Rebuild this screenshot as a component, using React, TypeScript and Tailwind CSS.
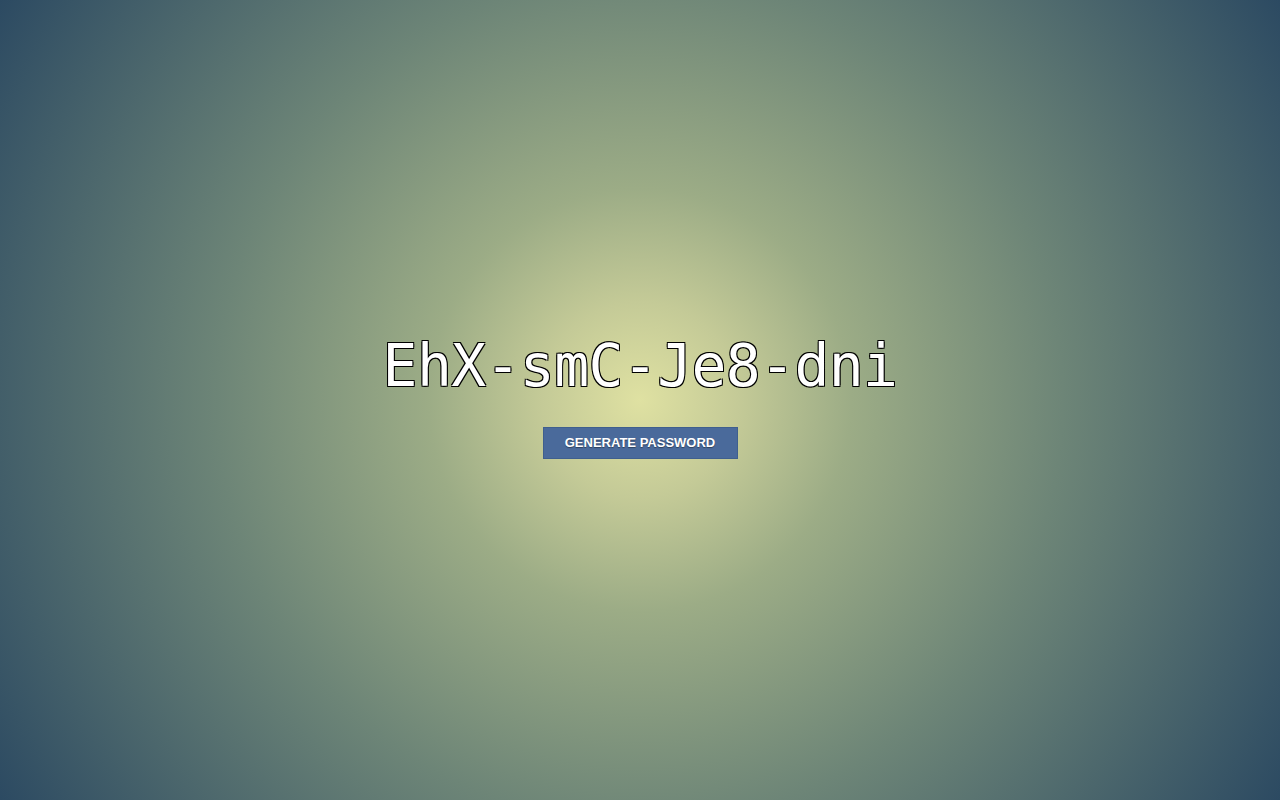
export default function App() {
  return (
    <div className="flex h-screen w-full flex-col items-center justify-center bg-[radial-gradient(circle,#dfe1a2_0%,#c4ca97_13%,#9cac86_28%,#6d8577_56%,#2c4a62_100%)]">
      <h1 className="m-0 font-['DejaVu_Sans_Mono',monospace] text-[58px] leading-none tracking-[-0.6px] text-white [text-shadow:1px_1px_0_#000,-1px_-1px_0_#000,1px_-1px_0_#000,-1px_1px_0_#000]">
        EhX-smC-Je8-dni
      </h1>
      <button
        type="button"
        className="mt-[32px] mb-[5px] h-8 w-[195px] border border-[#3f5f8e] bg-[#4a6a9b] font-['Liberation_Sans',Arial,sans-serif] text-[13px] font-bold text-white [text-shadow:0_1px_1px_rgba(0,0,0,0.4)]"
      >
        GENERATE PASSWORD
      </button>
    </div>
  );
}
